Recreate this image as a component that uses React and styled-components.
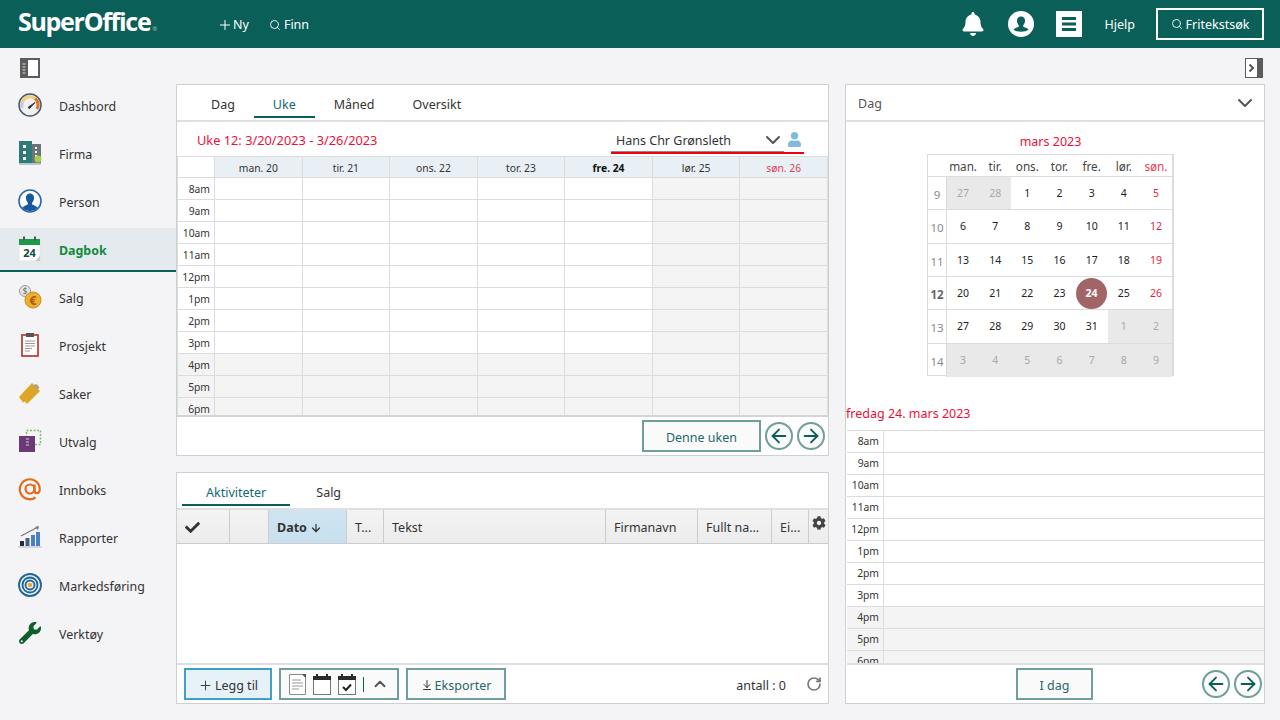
import React from "react";
import styled, { createGlobalStyle } from "styled-components";
import { ArrowLeft, ArrowRight, ArrowDown, ArrowDownToLine, ChevronDown, ChevronUp, Plus, RotateCw, Search } from "lucide-react";
import { FaBell, FaCheck, FaCog, FaUser, FaWrench } from "react-icons/fa";

const GlobalStyle = createGlobalStyle`
  html, body { margin: 0; padding: 0; height: 100%; background: #f4f4f6; }
  body { font-family: "Noto Sans", "Open Sans", sans-serif; font-size: 12.5px; color: #333; overflow: hidden; }
  * { box-sizing: border-box; }
`;

const TEAL = "#0a5f59";
const LINE = "#dcdcdc";
const RED = "#ec1038";

const Page = styled.div`
  width: 1280px;
  height: 720px;
  display: flex;
  flex-direction: column;
`;

const TopBar = styled.header`
  height: 48px;
  background: ${TEAL};
  color: #fff;
  display: flex;
  align-items: center;
  padding: 0 16px 0 18px;
  flex: none;
`;

const Logo = styled.div`
  width: 199px;
  padding-top: 2px;
  font-family: "Open Sans", sans-serif;
  font-size: 25px;
  font-weight: 700;
  letter-spacing: -1.3px;
  line-height: 46px;
  & small { font-size: 6px; font-weight: 400; letter-spacing: 0; opacity: 0.6; margin-left: 2px; }
`;

const TopLink = styled.div`
  display: flex;
  align-items: center;
  gap: ${(p) => p.$gap || 0}px;
  font-size: 12.5px;
  padding-top: 1px;
  margin-right: ${(p) => p.$mr || 0}px;
`;

const Spacer = styled.div`
  flex: 1;
`;

const TopIcon = styled.div`
  display: flex;
  align-items: center;
  justify-content: center;
  width: 26px;
  height: 26px;
  margin-right: ${(p) => p.$mr || 22}px;
  background: ${(p) => (p.$box ? "#fff" : "transparent")};
`;

const SearchButton = styled.div`
  width: 108px;
  height: 32px;
  border: 2px solid #fff;
  display: flex;
  align-items: center;
  justify-content: center;
  gap: 3px;
  font-size: 12.5px;
  margin-left: 21px;
`;

const Body = styled.div`
  flex: 1;
  display: flex;
  min-height: 0;
`;

const Sidebar = styled.nav`
  width: 176px;
  flex: none;
`;

const ToggleRow = styled.div`
  height: 36px;
  display: flex;
  align-items: center;
  justify-content: ${(p) => (p.$right ? "flex-end" : "flex-start")};
  padding: ${(p) => (p.$right ? "4px 2px 0 0" : "4px 0 0 20px")};
`;

const NavList = styled.div`
  display: flex;
  flex-direction: column;
  gap: 4px;
`;

const NavItem = styled.div`
  height: 44px;
  display: flex;
  align-items: center;
  gap: 17px;
  padding-left: 18px;
  font-size: 12.4px;
  background: ${(p) => (p.$active ? "#e5eaee" : "transparent")};
  border-bottom: 2px solid ${(p) => (p.$active ? TEAL : "transparent")};
  color: ${(p) => (p.$active ? "#128a3c" : "#333")};
  font-weight: ${(p) => (p.$active ? 700 : 400)};
  & > svg { flex: none; }
  & > span { padding-top: 3px; }
`;

const Main = styled.main`
  flex: 1;
  display: flex;
  flex-direction: column;
  padding-right: 15px;
`;

const Columns = styled.div`
  display: flex;
  gap: 16px;
`;

const LeftColumn = styled.div`
  width: 653px;
  display: flex;
  flex-direction: column;
  gap: 16px;
`;

const Panel = styled.section`
  background: #fff;
  border: 1px solid #ccd2d2;
  height: ${(p) => p.$h}px;
  width: ${(p) => p.$w || "auto"};
  display: flex;
  flex-direction: column;
  overflow: hidden;
`;

const Tabs = styled.div`
  height: 37px;
  flex: none;
  display: flex;
  gap: ${(p) => p.$gap || 0}px;
  padding-left: ${(p) => p.$left}px;
  border-bottom: 2px solid #dde0e0;
`;

const Tab = styled.div`
  padding: 0 ${(p) => p.$pad}px;
  height: 33px;
  line-height: 39px;
  font-size: 12.5px;
  color: ${(p) => (p.$active ? "#116a72" : "#333")};
  border-bottom: ${(p) => (p.$active ? `2px solid ${TEAL}` : "none")};
`;

const WeekRow = styled.div`
  height: 34px;
  flex: none;
  display: flex;
  align-items: center;
  justify-content: space-between;
  padding: 0 24px 0 20px;
`;

const RedLabel = styled.div`
  color: ${RED};
  font-size: 12.8px;
  padding-top: 2px;
`;

const UserSelect = styled.div`
  width: 193px;
  height: 26px;
  margin-top: 3px;
  display: flex;
  align-items: center;
  gap: 2px;
  padding: 0 2px 0 5px;
  border-bottom: 2px solid #f00010;
  background: linear-gradient(#8a8a8a, #8a8a8a) left bottom / 173px 1px no-repeat;
  font-size: 12.5px;
  & > span { flex: 1; padding-top: 2px; }
`;

const WeekGrid = styled.div`
  height: 261px;
  flex: none;
  overflow: hidden;
  border-bottom: 2px solid #d4d4d4;
  display: grid;
  grid-template-columns: 38px repeat(7, 1fr);
  grid-auto-rows: 22px;
`;

const CornerCell = styled.div`
  border: 1px solid ${LINE};
  background: #fff;
`;

const DayHead = styled.div`
  background: #e8f0f6;
  border: solid ${LINE};
  border-width: 1px 1px 1px 0;
  display: flex;
  align-items: center;
  justify-content: center;
  padding-top: 2px;
  font-size: 10.3px;
  font-weight: ${(p) => (p.$today ? 700 : 400)};
  color: ${(p) => (p.$sun ? "#e5404f" : p.$today ? "#111" : "#333")};
`;

const TimeCell = styled.div`
  border: solid ${LINE};
  border-width: 0 1px 1px 1px;
  background: ${(p) => (p.$shade ? "#f4f4f4" : "#fff")};
  font-size: 10.3px;
  color: #333;
  text-align: right;
  padding-right: 4px;
  line-height: 23px;
`;

const SlotCell = styled.div`
  border: solid ${LINE};
  border-width: 0 1px 1px 0;
  background: ${(p) => (p.$shade ? "#f4f4f4" : "#fff")};
`;

const PanelFooter = styled.div`
  height: 38px;
  flex: none;
  display: flex;
  align-items: center;
  gap: ${(p) => p.$gap || 4}px;
  padding: ${(p) => p.$pad};
  justify-content: ${(p) => p.$justify || "flex-start"};
`;

const OutlineButton = styled.div`
  width: ${(p) => p.$w}px;
  height: 32px;
  flex: none;
  border: 2px solid ${(p) => (p.$primary ? "#3f9fc6" : "#6f9e9c")};
  background: ${(p) => (p.$primary ? "#e6f1f8" : "#fafafa")};
  color: ${(p) => (p.$primary ? "#333" : "#25686c")};
  display: flex;
  align-items: center;
  justify-content: center;
  gap: ${(p) => p.$gap || 2}px;
  padding-top: 2px;
  font-size: 12.5px;
`;

const RoundButton = styled.div`
  width: 28px;
  height: 28px;
  flex: none;
  border-radius: 50%;
  border: 2px solid #6f9e9c;
  background: #fafafa;
  color: ${TEAL};
  display: flex;
  align-items: center;
  justify-content: center;
`;

const TableHead = styled.div`
  height: 34px;
  flex: none;
  display: grid;
  grid-template-columns: 53px 39px 78px 37px 222px 92px 74px 37px 1fr;
  background: linear-gradient(#f3f3f3, #ececec);
  border-bottom: 1px solid #ccc;
`;

const HeadCell = styled.div`
  display: flex;
  align-items: ${(p) => (p.$top ? "flex-start" : "center")};
  gap: 3px;
  padding: ${(p) => p.$pad || "2px 8px 0"};
  border-right: ${(p) => (p.$last ? "none" : "1px solid #ccc")};
  background: ${(p) => (p.$sorted ? "linear-gradient(#cfe4f1, #c8e0ef)" : "transparent")};
  font-size: 12.5px;
  font-weight: ${(p) => (p.$sorted ? 700 : 400)};
  white-space: nowrap;
  color: #333;
`;

const TableBody = styled.div`
  flex: 1;
  border-bottom: 2px solid #dde0e0;
`;

const IconGroup = styled.div`
  width: 120px;
  height: 32px;
  flex: none;
  border: 2px solid #6f9e9c;
  background: #fafafa;
  display: flex;
  align-items: center;
  padding-left: 8px;
  gap: 7px;
`;

const GroupSep = styled.div`
  width: 1px;
  height: 15px;
  background: ${TEAL};
`;

const CountLabel = styled.div`
  margin-left: auto;
  padding-top: 3px;
  font-size: 12.5px;
  color: #333;
  margin-right: 13px;
`;

const DropHead = styled.div`
  height: 37px;
  flex: none;
  display: flex;
  align-items: center;
  justify-content: space-between;
  padding: 0 7px 0 12px;
  border-bottom: 2px solid #dde0e0;
  font-size: 12.5px;
  color: #555;
  & > span { padding-top: 2px; }
`;

const MonthBlock = styled.div`
  width: 247px;
  margin-left: 81px;
  flex: none;
`;

const MonthTitle = styled.div`
  height: 32px;
  padding-top: 10px;
  line-height: 20px;
  text-align: center;
  font-size: 12.5px;
  color: ${RED};
`;

const MonthGrid = styled.div`
  display: grid;
  grid-template-columns: 19px repeat(7, 1fr);
  grid-template-rows: 22px repeat(6, 33.34px);
  border: 1px solid ${LINE};
  border-right-width: 2px;
  width: 247px;
  height: 222px;
`;

const WeekdayCell = styled.div`
  display: flex;
  align-items: center;
  justify-content: center;
  padding-top: 1px;
  font-size: 11.7px;
  color: ${(p) => (p.$sun ? "#e5404f" : "#444")};
  border-bottom: 1px solid ${LINE};
`;

const WeekNo = styled.div`
  display: flex;
  align-items: center;
  justify-content: center;
  padding-top: 3px;
  font-size: 11.5px;
  font-weight: ${(p) => (p.$bold ? 700 : 400)};
  color: ${(p) => (p.$bold ? "#666" : "#8a8a8a")};
  border-right: 1px solid ${LINE};
  border-bottom: ${(p) => (p.$last ? "none" : `1px solid ${LINE}`)};
`;

const DateCell = styled.div`
  display: flex;
  align-items: center;
  justify-content: center;
  font-size: 10.5px;
  background: ${(p) => (p.$out ? "#e9e9e9" : "#fff")};
  color: ${(p) => (p.$out ? "#a8a8a8" : p.$sun ? "#e81c40" : "#222")};
  border-bottom: ${(p) => (p.$last ? "none" : `1px solid ${LINE}`)};
`;

const TodayMark = styled.span`
  width: 31px;
  height: 31px;
  border-radius: 50%;
  background: #a16568;
  color: #fff;
  font-weight: 700;
  display: flex;
  align-items: center;
  justify-content: center;
`;

const DayTitle = styled.div`
  height: 54px;
  flex: none;
  display: flex;
  align-items: flex-end;
  padding: 0 0 6px 0;
  line-height: 20px;
  font-size: 12.5px;
  color: ${RED};
`;

const DayGrid = styled.div`
  height: 235px;
  flex: none;
  overflow: hidden;
  margin-left: 1px;
  border-top: 1px solid ${LINE};
  border-bottom: 2px solid #dde0e0;
  display: grid;
  grid-template-columns: 37px 1fr;
  grid-auto-rows: 22px;
`;

const DayTime = styled(TimeCell)`
  border-left: none;
  line-height: 21px;
`;

const DaySlot = styled(SlotCell)`
  border-right: none;
`;

const FooterSide = styled.div`
  display: flex;
  gap: 4px;
  margin-left: auto;
`;

const Wrench = styled(FaWrench)`
  margin: 0 1px;
`;

const hours = ["8am", "9am", "10am", "11am", "12pm", "1pm", "2pm", "3pm", "4pm", "5pm", "6pm"];
const days = [
  { label: "man. 20" },
  { label: "tir. 21" },
  { label: "ons. 22" },
  { label: "tor. 23" },
  { label: "fre. 24", today: true },
  { label: "lør. 25", weekend: true },
  { label: "søn. 26", weekend: true, sun: true },
];
const weekdays = ["man.", "tir.", "ons.", "tor.", "fre.", "lør.", "søn."];
const month = [
  { no: 9, dates: [27, 28, 1, 2, 3, 4, 5], out: [0, 1] },
  { no: 10, dates: [6, 7, 8, 9, 10, 11, 12], out: [] },
  { no: 11, dates: [13, 14, 15, 16, 17, 18, 19], out: [] },
  { no: 12, dates: [20, 21, 22, 23, 24, 25, 26], out: [], bold: true },
  { no: 13, dates: [27, 28, 29, 30, 31, 1, 2], out: [5, 6] },
  { no: 14, dates: [3, 4, 5, 6, 7, 8, 9], out: [0, 1, 2, 3, 4, 5, 6] },
];

const GaugeIcon = () => (
  <svg width="24" height="24" viewBox="0 0 24 24">
    <circle cx="12" cy="12" r="11" fill="#eef0f2" stroke="#47586b" strokeWidth="1.5" />
    <path d="M4.5 9A8 8 0 0 1 17 5.5" fill="none" stroke="#f2cf7c" strokeWidth="3" />
    <path d="M17 5.5A8 8 0 0 1 19 16" fill="none" stroke="#e2701f" strokeWidth="3" />
    <path d="M4 15a8 8 0 0 1 .5-6" fill="none" stroke="#c5cbd2" strokeWidth="3" />
    <path d="M10 14.5L17 9.5L11.5 15.5Z" fill="#333" stroke="#333" />
  </svg>
);

const BuildingIcon = () => (
  <svg width="24" height="24" viewBox="0 0 24 24">
    <rect x="1" y="0" width="13" height="22" fill="#2d7a78" />
    <rect x="14" y="3" width="9" height="19" fill="#6d7478" />
    <rect x="1" y="22" width="22" height="2" fill="#b8c4cc" />
    <path d="M5 4h3v3H5zM5 10h3v3H5zM5 16h3v3H5zM17 6h2v2h-2zM17 10h2v2h-2zM17 14h2v2h-2z" fill="#fff" />
    <circle cx="20" cy="18" r="3.5" fill="#a5cf4a" />
  </svg>
);

const PersonIcon = () => (
  <svg width="24" height="24" viewBox="0 0 24 24">
    <circle cx="12" cy="12" r="11" fill="#fff" stroke="#2a69a8" strokeWidth="1.6" />
    <path d="M12 4.5c3 0 4.2 2.4 4 5-.2 2-1 3.4-2 4.4v1.3c1 1 5 1.6 5.8 3.8A10 10 0 0 1 12 22a10 10 0 0 1-7.8-3c.8-2.2 4.8-2.8 5.8-3.8v-1.3c-1-1-1.8-2.4-2-4.4-.2-2.6 1-5 4-5z" fill="#16599f" />
  </svg>
);

const CalendarNavIcon = () => (
  <svg width="24" height="26" viewBox="0 0 24 26">
    <rect x="1" y="3" width="21" height="22" fill="#fff" stroke="#e4e4e4" />
    <rect x="1" y="3" width="21" height="6" fill="#1d9a49" />
    <rect x="5" y="0.5" width="2" height="4" fill="#555" />
    <rect x="16" y="0.5" width="2" height="4" fill="#555" />
    <path d="M22 20v5h-5z" fill="#c8c8c8" />
    <text x="11.5" y="21" fontSize="11" fontWeight="700" textAnchor="middle" fill="#124a3f" fontFamily="Noto Sans">24</text>
  </svg>
);

const CoinIcon = () => (
  <svg width="24" height="26" viewBox="0 0 24 26">
    <circle cx="7" cy="7" r="5.5" fill="#e4e4e4" stroke="#9a9a9a" />
    <text x="7" y="10" fontSize="8" textAnchor="middle" fill="#666" fontFamily="Noto Sans">$</text>
    <circle cx="15" cy="16" r="8" fill="#eab22c" stroke="#d18a1a" />
    <text x="15" y="20.5" fontSize="12" fontWeight="700" textAnchor="middle" fill="#b3540f" fontFamily="Noto Sans">€</text>
  </svg>
);

const ClipboardIcon = () => (
  <svg width="24" height="26" viewBox="0 0 24 26">
    <rect x="4" y="3" width="16" height="21" fill="#fff" stroke="#b8453c" strokeWidth="1.8" />
    <rect x="8" y="1" width="8" height="4" fill="#555" />
    <path d="M7 9h10M7 11.5h10M7 14h10M7 16.5h7M7 19h5" stroke="#9a9a9a" fill="none" />
  </svg>
);

const TicketIcon = () => (
  <svg width="24" height="24" viewBox="0 0 24 24">
    <path d="M1 16L14 2l2.5 2.5 2-1.5 3 3-1.5 2 2 2L9 23l-2-2.5-2 1z" fill="#dfa626" />
    <path d="M16 4l4 4" stroke="#a9a19a" strokeWidth="3" />
  </svg>
);

const SelectionIcon = () => (
  <svg width="24" height="24" viewBox="0 0 24 24">
    <rect x="8.5" y="1.5" width="14" height="14" fill="none" stroke="#83b96f" strokeWidth="1.5" strokeDasharray="2 1.5" />
    <rect x="1" y="7" width="16" height="16" fill="#6b3a76" />
    <path d="M8 10h3M8 13h3M8 16h3" stroke="#d8c8dc" />
  </svg>
);

const AtIcon = () => (
  <svg width="24" height="24" viewBox="0 0 24 24" fill="none" stroke="#e56b1c" strokeWidth="2.2">
    <circle cx="12" cy="12" r="4.5" />
    <path d="M16.5 7.5v6.2c0 1.6 1 2.5 2.3 2.5s3-1.3 3-4.2A10 10 0 1 0 17.5 20.5" />
  </svg>
);

const ChartIcon = () => (
  <svg width="24" height="24" viewBox="0 0 24 24">
    <path d="M3 11L20 2" stroke="#777" strokeWidth="1.3" fill="none" />
    <path d="M21 1l-1 4-3-3z" fill="#777" />
    <rect x="2" y="16" width="4" height="5" fill="#1d2c44" />
    <rect x="7.5" y="13" width="4" height="8" fill="#4a5f80" />
    <rect x="13" y="10" width="4" height="11" fill="#4a7fc0" />
    <rect x="18" y="7" width="4" height="14" fill="#4a80c8" />
    <rect x="0" y="21" width="24" height="2" fill="#d4d8dc" />
  </svg>
);

const TargetIcon = () => (
  <svg width="24" height="24" viewBox="0 0 24 24" fill="none" stroke="#1f6796" strokeWidth="1.9">
    <circle cx="12" cy="12" r="11" />
    <circle cx="12" cy="12" r="7.5" />
    <circle cx="12" cy="12" r="4.5" />
    <circle cx="12" cy="12" r="2.3" fill="#efa92f" stroke="none" />
  </svg>
);

const WrenchIcon = () => <Wrench size={22} color="#0e5f2b" />;

const navItems = [
  { label: "Dashbord", icon: GaugeIcon },
  { label: "Firma", icon: BuildingIcon },
  { label: "Person", icon: PersonIcon },
  { label: "Dagbok", icon: CalendarNavIcon, active: true },
  { label: "Salg", icon: CoinIcon },
  { label: "Prosjekt", icon: ClipboardIcon },
  { label: "Saker", icon: TicketIcon },
  { label: "Utvalg", icon: SelectionIcon },
  { label: "Innboks", icon: AtIcon },
  { label: "Rapporter", icon: ChartIcon },
  { label: "Markedsføring", icon: TargetIcon },
  { label: "Verktøy", icon: WrenchIcon },
];

const ProfileBadge = () => (
  <svg width="26" height="26" viewBox="0 0 26 26">
    <circle cx="13" cy="13" r="13" fill="#fff" />
    <path d="M13 5.5c3 0 4.2 2.2 4 4.8-.2 1.8-.9 3-1.8 3.9v1.3c1 1 4.3 1.4 5.3 3.2-1.5 1.3-4.5 2-7.5 2s-6-.7-7.500-2c1-1.800 4.300-2.200 5.300-3.200v-1.300c-.9-.9-1.600-2.100-1.800-3.900-.2-2.600 1-4.800 4-4.800z" fill={TEAL} />
  </svg>
);

const MenuGlyph = () => (
  <svg width="14" height="14" viewBox="0 0 14 14" fill={TEAL}>
    <rect width="14" height="3" />
    <rect y="5.5" width="14" height="3" />
    <rect y="11" width="14" height="3" />
  </svg>
);

const PanelToggleIcon = () => (
  <svg width="20" height="20" viewBox="0 0 20 20">
    <rect width="20" height="20" fill="#5c5c5c" />
    <rect x="8" y="2" width="10" height="16" fill="#fff" />
    <path d="M2.5 6h3M2.5 9h3M2.5 12h3M2.5 15h3" stroke="#ddd" />
  </svg>
);

const PanelExpandIcon = () => (
  <svg width="18" height="20" viewBox="0 0 18 20">
    <rect width="18" height="20" fill="#5c5c5c" />
    <rect x="1" y="1" width="11" height="18" fill="#fff" />
    <path d="M4.5 6.5L8 10l-3.5 3.5" fill="none" stroke="#555" strokeWidth="2" />
  </svg>
);

const DocIcon = () => (
  <svg width="17" height="21" viewBox="0 0 17 21">
    <path d="M.5.5h13l3 3v17H.5z" fill="#fff" stroke="#8a8a8a" />
    <path d="M13 0h4v4z" fill="#555" />
    <path d="M3 6h9M3 9h11M3 12h11M3 15h7" stroke="#9a9a9a" fill="none" />
  </svg>
);

const CalIcon = ({ check }) => (
  <svg width="18" height="21" viewBox="0 0 18 21">
    <rect x=".5" y="2.5" width="17" height="18" fill="#fff" stroke="#777" />
    <rect y="2" width="18" height="4" fill="#2b2b2b" />
    <rect x="3" y="0" width="2" height="3" fill="#2b2b2b" />
    <rect x="13" y="0" width="2" height="3" fill="#2b2b2b" />
    {check && <path d="M5 13l3 3 5-5.5" fill="none" stroke="#222" strokeWidth="2" />}
  </svg>
);

function ArrowPair() {
  return (
    <>
      <RoundButton><ArrowLeft size={22} strokeWidth={2} /></RoundButton>
      <RoundButton><ArrowRight size={22} strokeWidth={2} /></RoundButton>
    </>
  );
}

function WeekCalendar() {
  return (
    <WeekGrid>
      <CornerCell />
      {days.map((d) => (
        <DayHead key={d.label} $today={d.today} $sun={d.sun}>{d.label}</DayHead>
      ))}
      {hours.map((h, i) => (
        <React.Fragment key={h}>
          <TimeCell $shade={i > 7}>{h}</TimeCell>
          {days.map((d) => (
            <SlotCell key={d.label} $shade={i > 7 || d.weekend} />
          ))}
        </React.Fragment>
      ))}
    </WeekGrid>
  );
}

function MonthCalendar() {
  return (
    <MonthBlock>
      <MonthTitle>mars 2023</MonthTitle>
      <MonthGrid>
        <WeekdayCell />
        {weekdays.map((w, i) => (
          <WeekdayCell key={w} $sun={i === 6}>{w}</WeekdayCell>
        ))}
        {month.map((row, r) => (
          <React.Fragment key={row.no}>
            <WeekNo $bold={row.bold} $last={r === 5}>{row.no}</WeekNo>
            {row.dates.map((d, i) => (
              <DateCell key={i} $out={row.out.includes(i)} $sun={i === 6} $last={r === 5}>
                {row.bold && d === 24 ? <TodayMark>{d}</TodayMark> : d}
              </DateCell>
            ))}
          </React.Fragment>
        ))}
      </MonthGrid>
    </MonthBlock>
  );
}

export default function App() {
  return (
    <Page>
      <GlobalStyle />
      <TopBar>
        <Logo>SuperOffice<small>®</small></Logo>
        <TopLink $mr={20} $gap={0}><Plus size={16} strokeWidth={1.5} />Ny</TopLink>
        <TopLink $gap={3}><Search size={12} strokeWidth={1.8} />Finn</TopLink>
        <Spacer />
        <TopIcon><FaBell size={24} color="#fff" /></TopIcon>
        <TopIcon><ProfileBadge /></TopIcon>
        <TopIcon $box $mr={23}><MenuGlyph /></TopIcon>
        <TopLink>Hjelp</TopLink>
        <SearchButton><Search size={12} strokeWidth={1.8} />Fritekstsøk</SearchButton>
      </TopBar>
      <Body>
        <Sidebar>
          <ToggleRow><PanelToggleIcon /></ToggleRow>
          <NavList>
            {navItems.map(({ label, icon: Icon, active }) => (
              <NavItem key={label} $active={active}>
                <Icon />
                <span>{label}</span>
              </NavItem>
            ))}
          </NavList>
        </Sidebar>
        <Main>
          <ToggleRow $right><PanelExpandIcon /></ToggleRow>
          <Columns>
            <LeftColumn>
              <Panel $h={372}>
                <Tabs $left={15}>
                  <Tab $pad={19}>Dag</Tab>
                  <Tab $pad={19} $active>Uke</Tab>
                  <Tab $pad={19}>Måned</Tab>
                  <Tab $pad={19}>Oversikt</Tab>
                </Tabs>
                <WeekRow>
                  <RedLabel>Uke 12: 3/20/2023 - 3/26/2023</RedLabel>
                  <UserSelect>
                    <span>Hans Chr Grønsleth</span>
                    <ChevronDown size={24} strokeWidth={2} color="#555" />
                    <FaUser size={15} color="#80bbdc" />
                  </UserSelect>
                </WeekRow>
                <WeekCalendar />
                <PanelFooter $pad="0 3px 0 0" $justify="flex-end">
                  <OutlineButton $w={119}>Denne uken</OutlineButton>
                  <ArrowPair />
                </PanelFooter>
              </Panel>
              <Panel $h={232}>
                <Tabs $left={5} $gap={2}>
                  <Tab $pad={24} $active>Aktiviteter</Tab>
                  <Tab $pad={24}>Salg</Tab>
                </Tabs>
                <TableHead>
                  <HeadCell><FaCheck size={15} color="#333" /></HeadCell>
                  <HeadCell />
                  <HeadCell $sorted>Dato<ArrowDown size={12} strokeWidth={2.5} /></HeadCell>
                  <HeadCell>T...</HeadCell>
                  <HeadCell>Tekst</HeadCell>
                  <HeadCell>Firmanavn</HeadCell>
                  <HeadCell>Fullt na...</HeadCell>
                  <HeadCell>Ei...</HeadCell>
                  <HeadCell $last $top $pad="6px 3px"><FaCog size={14} color="#444" /></HeadCell>
                </TableHead>
                <TableBody />
                <PanelFooter $gap={7} $pad="0 6px 0 7px">
                  <OutlineButton $w={88} $primary><Plus size={15} strokeWidth={1.5} />Legg til</OutlineButton>
                  <IconGroup>
                    <DocIcon />
                    <CalIcon />
                    <CalIcon check />
                    <GroupSep />
                    <ChevronUp size={18} strokeWidth={2.5} color="#555" />
                  </IconGroup>
                  <OutlineButton $w={100}><ArrowDownToLine size={12} color="#333" />Eksporter</OutlineButton>
                  <CountLabel>antall : 0</CountLabel>
                  <RotateCw size={16} strokeWidth={2.5} color="#777" />
                </PanelFooter>
              </Panel>
            </LeftColumn>
            <Panel $h={620} $w="420px">
              <DropHead>
                <span>Dag</span>
                <ChevronDown size={24} strokeWidth={2} color="#555" />
              </DropHead>
              <MonthCalendar />
              <DayTitle>fredag 24. mars 2023</DayTitle>
              <DayGrid>
                {hours.map((h, i) => (
                  <React.Fragment key={h}>
                    <DayTime $shade={i > 7}>{h}</DayTime>
                    <DaySlot $shade={i > 7} />
                  </React.Fragment>
                ))}
              </DayGrid>
              <PanelFooter $pad="0 2px 0 170px">
                <OutlineButton $w={77}>I dag</OutlineButton>
                <FooterSide><ArrowPair /></FooterSide>
              </PanelFooter>
            </Panel>
          </Columns>
        </Main>
      </Body>
    </Page>
  );
}
